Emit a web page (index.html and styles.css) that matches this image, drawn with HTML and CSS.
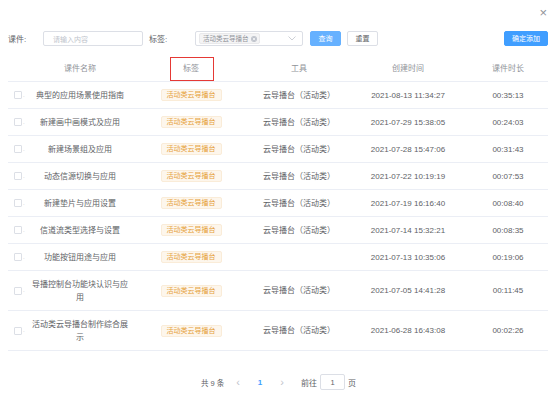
FILE: index.html
```html
<!DOCTYPE html>
<html lang="zh">
<head>
<meta charset="utf-8">
<link rel="stylesheet" href="styles.css">
</head>
<body>
<div class="dialog">
  <div class="topbar">
    <span class="close">×</span>
  </div>
  <div class="filters">
    <span class="label label-first">课件:</span>
    <div class="input"><span class="placeholder">请输入内容</span></div>
    <span class="label label-tag">标签:</span>
    <div class="select">
      <span class="sel-tag">活动类云导播台<span class="sel-close"><svg width="6" height="6" viewBox="0 0 6 6"><circle cx="3" cy="3" r="3" fill="#c0c4cc"/><path d="M1.8 1.8L4.2 4.2M4.2 1.8L1.8 4.2" stroke="#fff" stroke-width="0.7"/></svg></span></span>
      <svg class="chev" width="8" height="5" viewBox="0 0 8 5"><path d="M0.5 0.5L4 4L7.5 0.5" fill="none" stroke="#c0c4cc" stroke-width="0.8"/></svg>
    </div>
    <button class="btn btn-query">查询</button>
    <button class="btn btn-reset">重置</button>
    <span class="spacer"></span>
    <button class="btn btn-add">确定添加</button>
  </div>
  <table class="grid">
    <colgroup>
      <col class="c0"><col class="c1"><col class="c2"><col class="c3"><col class="c4"><col class="c5">
    </colgroup>
    <thead>
      <tr><th></th><th>课件名称</th><th class="th-tag">标签<span class="mark"></span></th><th>工具</th><th>创建时间</th><th>课件时长</th></tr>
    </thead>
    <tbody>
      <tr><td class="ck"><span class="box"></span><span class="dot">.</span></td><td>典型的应用场景使用指南</td><td><span class="tag">活动类云导播台</span></td><td>云导播台（活动类）</td><td>2021-08-13 11:34:27</td><td>00:35:13</td></tr>
      <tr><td class="ck"><span class="box"></span><span class="dot">.</span></td><td>新建画中画模式及应用</td><td><span class="tag">活动类云导播台</span></td><td>云导播台（活动类）</td><td>2021-07-29 15:38:05</td><td>00:24:03</td></tr>
      <tr><td class="ck"><span class="box"></span><span class="dot">.</span></td><td>新建场景组及应用</td><td><span class="tag">活动类云导播台</span></td><td>云导播台（活动类）</td><td>2021-07-28 15:47:06</td><td>00:31:43</td></tr>
      <tr><td class="ck"><span class="box"></span><span class="dot">.</span></td><td>动态信源切换与应用</td><td><span class="tag">活动类云导播台</span></td><td>云导播台（活动类）</td><td>2021-07-22 10:19:19</td><td>00:07:53</td></tr>
      <tr><td class="ck"><span class="box"></span><span class="dot">.</span></td><td>新建垫片与应用设置</td><td><span class="tag">活动类云导播台</span></td><td>云导播台（活动类）</td><td>2021-07-19 16:16:40</td><td>00:08:40</td></tr>
      <tr><td class="ck"><span class="box"></span><span class="dot">.</span></td><td>信道流类型选择与设置</td><td><span class="tag">活动类云导播台</span></td><td>云导播台（活动类）</td><td>2021-07-14 15:32:21</td><td>00:08:35</td></tr>
      <tr><td class="ck"><span class="box"></span><span class="dot">.</span></td><td>功能按钮用途与应用</td><td><span class="tag">活动类云导播台</span></td><td></td><td>2021-07-13 10:35:06</td><td>00:19:06</td></tr>
      <tr><td class="ck"><span class="box"></span><span class="dot">.</span></td><td>导播控制台功能块认识与应用</td><td><span class="tag">活动类云导播台</span></td><td>云导播台（活动类）</td><td>2021-07-05 14:41:28</td><td>00:11:45</td></tr>
      <tr><td class="ck"><span class="box"></span><span class="dot">.</span></td><td>活动类云导播台制作综合展示</td><td><span class="tag">活动类云导播台</span></td><td>云导播台（活动类）</td><td>2021-06-28 16:43:08</td><td>00:02:26</td></tr>
    </tbody>
  </table>
  <div class="pager">
    <span class="total">共 9 条</span>
    <span class="arrow">‹</span>
    <span class="page">1</span>
    <span class="arrow arrow-next">›</span>
    <span class="goto">前往</span>
    <span class="pinput">1</span>
    <span class="unit">页</span>
  </div>
</div>
</body>
</html>
```
FILE: styles.css
```css
* { box-sizing: border-box; }
html, body { margin: 0; padding: 0; background: #fff; }
body {
  font-family: "Liberation Sans", "Noto Sans CJK SC", sans-serif;
  font-size: 8px;
  color: #606266;
}
.dialog { width: 553px; padding: 0 5px 0 8px; }
.topbar {
  height: 31px;
  display: flex;
  justify-content: flex-end;
  align-items: flex-start;
}
.close {
  margin-top: 6px;
  margin-right: 1px;
  font-size: 13px;
  line-height: 14px;
  color: #909399;
}
.filters {
  display: flex;
  align-items: center;
  height: 15px;
}
.label { color: #606266; font-size: 8px; }
.label-first { width: 35px; }
.label-tag { width: 46px; margin-left: 6px; }
.input {
  width: 100px;
  height: 15px;
  border: 1px solid #dcdfe6;
  border-radius: 2px;
  padding-left: 9px;
  display: flex;
  align-items: center;
}
.placeholder { color: #c0c4cc; font-size: 7px; }
.select {
  width: 108px;
  height: 15px;
  border: 1px solid #dcdfe6;
  border-radius: 2px;
  display: flex;
  align-items: center;
  padding-left: 3px;
  padding-right: 6px;
}
.sel-tag {
  display: inline-flex;
  align-items: center;
  height: 11px;
  padding: 0 2px 0 3px;
  background: #f4f4f5;
  border: 1px solid #e9e9eb;
  border-radius: 2px;
  color: #909399;
  font-size: 6.5px;
  line-height: 9px;
}
.sel-close { display: inline-flex; margin-left: 2px; }
.chev { margin-left: auto; }
.btn {
  height: 15px;
  padding: 0;
  border-radius: 2px;
  font-family: inherit;
  font-size: 7px;
  line-height: 13px;
  cursor: pointer;
}
.btn-query {
  width: 31px;
  margin-left: 7px;
  background: #66b1ff;
  border: 1px solid #66b1ff;
  color: #fff;
}
.btn-reset {
  width: 31px;
  margin-left: 6px;
  background: #fff;
  border: 1px solid #dcdfe6;
  color: #606266;
}
.spacer { flex: 1; }
.btn-add {
  width: 44px;
  background: #409eff;
  border: 1px solid #409eff;
  color: #fff;
}
.grid {
  margin-top: 9px;
  width: 540px;
  border-collapse: collapse;
  table-layout: fixed;
}
.c0 { width: 20px; }
.c1 { width: 104px; }
.c2 { width: 118px; }
.c3 { width: 98px; }
.c4 { width: 120px; }
.c5 { width: 80px; }
.grid th, .grid td {
  padding: 6.5px 3px;
  line-height: 13px;
  text-align: center;
  border-bottom: 1px solid #ebeef5;
  font-weight: normal;
  vertical-align: middle;
}
.grid th { color: #909399; }
.grid td { color: #606266; }
.th-tag { position: relative; }
.mark {
  position: absolute;
  left: 50%;
  top: 2px;
  width: 44px;
  height: 24px;
  margin-left: -21px;
  border: 1px solid #e53935;
}
.grid td.ck { padding: 0 0 0 6px; text-align: left; }
.box {
  display: inline-block;
  width: 8px;
  height: 8px;
  border: 1px solid #dcdfe6;
  border-radius: 1px;
  vertical-align: middle;
}
.dot { color: #c0c4cc; font-size: 6px; vertical-align: middle; margin-left: 1px; }
.tag {
  display: inline-block;
  height: 12px;
  padding: 0 5px;
  background: #fdf6ec;
  border: 1px solid #faecd8;
  border-radius: 2px;
  color: #e6a23c;
  font-size: 7px;
  line-height: 10px;
  vertical-align: middle;
}
.pager {
  margin-top: 23px;
  display: flex;
  align-items: center;
  height: 16px;
  padding-left: 193px;
  font-size: 7.5px;
  color: #606266;
}
.total { width: 24px; white-space: nowrap; margin-right: 7px; }
.arrow { color: #c0c4cc; font-size: 11px; width: 12px; text-align: center; }
.page { color: #409eff; font-weight: bold; width: 20px; margin: 0 6px; text-align: center; font-size: 8px; }
.arrow-next { margin-right: 13px; }
.goto { font-size: 8px; margin-right: 3px; }
.pinput {
  width: 25px;
  height: 16px;
  border: 1px solid #dcdfe6;
  border-radius: 2px;
  display: flex;
  align-items: center;
  justify-content: center;
  font-size: 7.5px;
}
.unit { font-size: 8px; margin-left: 3px; }
```
